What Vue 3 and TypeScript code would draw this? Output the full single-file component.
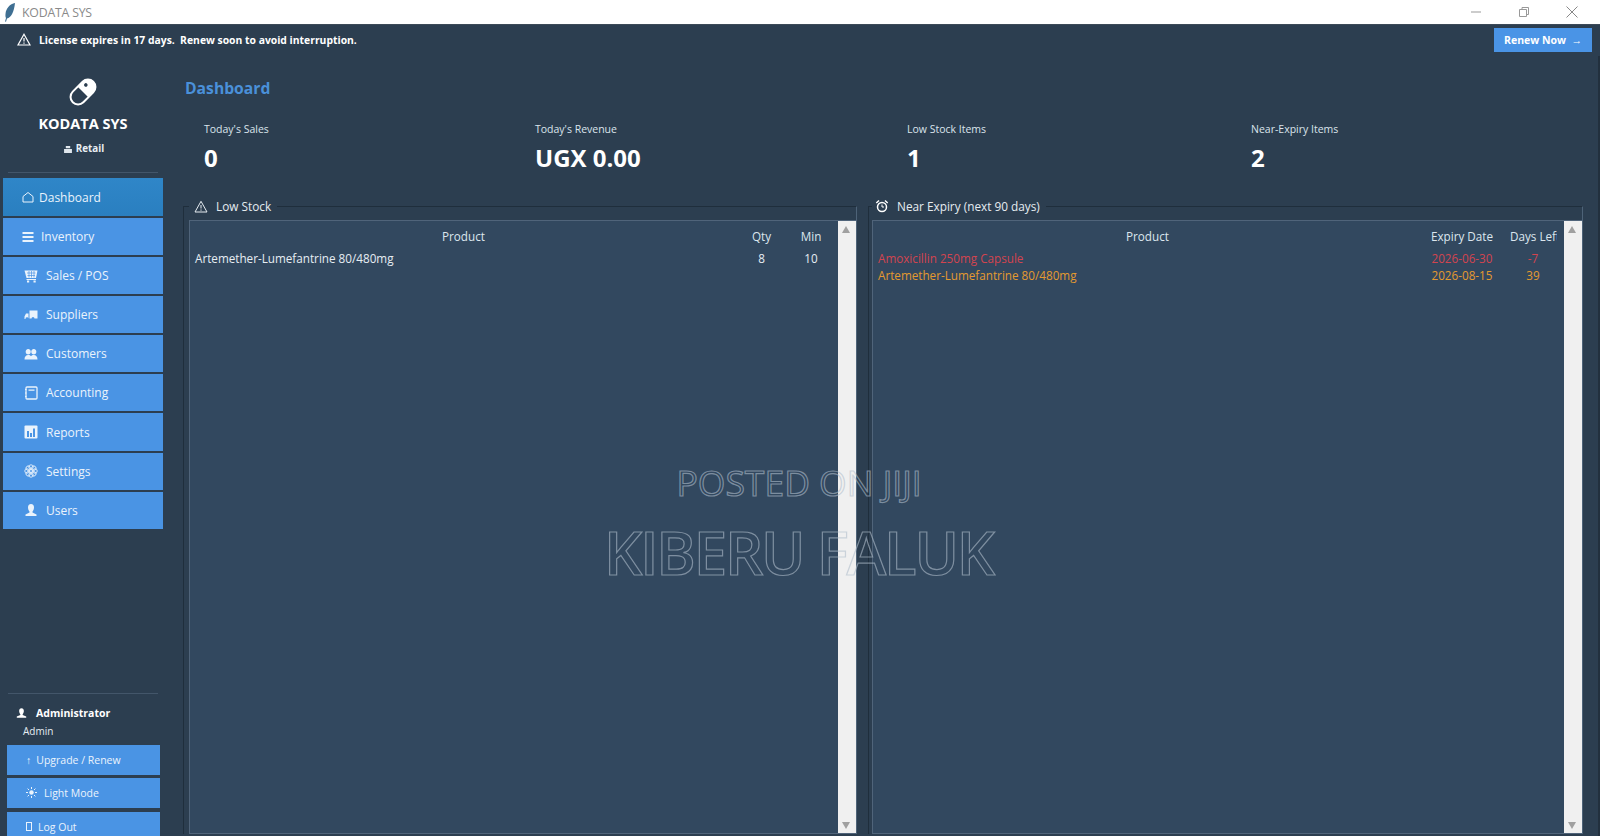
<script setup lang="ts">
interface NavItem { label: string; icon: string; active?: boolean }
const nav: NavItem[] = [
  { label: 'Dashboard', icon: 'home', active: true },
  { label: 'Inventory', icon: 'menu' },
  { label: 'Sales / POS', icon: 'cart' },
  { label: 'Suppliers', icon: 'truck' },
  { label: 'Customers', icon: 'people' },
  { label: 'Accounting', icon: 'book' },
  { label: 'Reports', icon: 'chart' },
  { label: 'Settings', icon: 'gear' },
  { label: 'Users', icon: 'user' },
]
const stats = [
  { label: "Today's Sales", value: '0' },
  { label: "Today's Revenue", value: 'UGX 0.00' },
  { label: 'Low Stock Items', value: '1' },
  { label: 'Near-Expiry Items', value: '2' },
]
const expiry = [
  { name: 'Amoxicillin 250mg Capsule', date: '2026-06-30', days: '-7', cls: 'red' },
  { name: 'Artemether-Lumefantrine 80/480mg', date: '2026-08-15', days: '39', cls: 'orange' },
]
const petals = [0, 45, 90, 135, 180, 225, 270, 315]
</script>

<template>
  <div class="app">
    <header class="titlebar">
      <svg class="feather" width="12" height="20" viewBox="0 0 12 20">
        <path d="M11 1C6 2 2 6 1.500 12c-.2 2 0 3 .5 4L1 19.500l1 .3 1-3.300c4-1 7-6 8-15.500z" fill="#3f6f92" />
      </svg>
      <span class="app-name">KODATA SYS</span>
      <div class="win-controls">
        <svg width="14" height="14" viewBox="0 0 14 14"><path d="M2 7h10" stroke="#999" fill="none" /></svg>
        <svg width="14" height="14" viewBox="0 0 14 14"><path d="M2.500 4.500h7v7h-7zM5 4.500V2.500h6.500v7h-2" stroke="#999" fill="none" /></svg>
        <svg width="14" height="14" viewBox="0 0 14 14"><path d="M1.500 1.500l11 11M12.500 1.500l-11 11" stroke="#888" fill="none" /></svg>
      </div>
    </header>

    <div class="banner">
      <svg class="warn" width="14" height="13" viewBox="0 0 14 13"><path d="M7 1.300L13 12H1zM7 5v3.500M7 9.500v1.200" stroke="#fff" stroke-width="1.200" fill="none" /></svg>
      <span class="banner-text">License expires in 17 days.&nbsp; Renew soon to avoid interruption.</span>
      <button class="renew">Renew Now &nbsp;→</button>
    </div>

    <div class="main">
      <aside class="sidebar">
        <div class="brand">
          <svg width="32" height="32" viewBox="0 0 32 32">
            <g transform="rotate(-45 16 16)">
              <rect x="1.500" y="8.500" width="29" height="15" rx="7.500" fill="none" stroke="#fff" stroke-width="2" />
              <path d="M16 8.500h7.500a7.500 7.500 0 0 1 0 15H16z" fill="#fff" />
              <circle cx="23" cy="13" r="1.800" fill="#2c3e50" />
            </g>
          </svg>
          <div class="brand-name">KODATA SYS</div>
          <div class="brand-sub">
            <svg width="8" height="7" viewBox="0 0 9 8"><path d="M2 0h5v2.500H2zM0 3.500h9V8H0z" fill="#dfe6ec" /></svg>
            <span>Retail</span>
          </div>
        </div>
        <nav class="nav">
          <a v-for="item in nav" :key="item.label" class="nav-item" :class="{ active: item.active, menu: item.icon === 'menu' }">
            <svg class="nav-icon" width="14" height="14" viewBox="0 0 14 14" fill="#eaf3fc">
              <path v-if="item.icon === 'home'" d="M2 6.500L7 2.500l5 4v5.500H2z" fill="none" stroke="#eaf3fc" />
              <path v-else-if="item.icon === 'menu'" d="M1.500 2h11v2h-11zM1.500 6h11v2h-11zM1.500 10h11v2h-11z" />
              <template v-else-if="item.icon === 'cart'">
                <path d="M.5 1.500h13L12 9H2.500z" />
                <path d="M3 4h8.500M3.500 6.500h7.500M5 2v6.500M7.500 2v6.500M10 2v6.500" stroke="#4a94e4" stroke-width=".7" fill="none" />
                <path d="M2.500 10h9.500v1H2.500zM3 11.500h2.200v2H3zM9.500 11.500h2.200v2H9.500z" />
              </template>
              <path v-else-if="item.icon === 'truck'" d="M5.500 2.500h8v8h-3a1.500 1.500 0 0 0-3 0h-2zM.5 8.500L2 5.500h2.500v5a1.500 1.500 0 0 0-3 .5H.5z" />
              <path v-else-if="item.icon === 'people'" d="M4.200 2a2.500 2.500 0 0 1 2.500 3c0 1.500-1 2.500-2.500 2.500S1.700 6.500 1.700 5a2.500 2.500 0 0 1 2.500-3zM9.800 2a2.500 2.500 0 0 1 2.500 3c0 1.500-1 2.500-2.500 2.500S7.300 6.500 7.300 5a2.500 2.500 0 0 1 2.500-3zM.5 12.500c0-3 1.500-4.500 3.700-4.500 1.300 0 2.300.4 2.800 1.200C7.500 8.400 8.500 8 9.800 8c2.200 0 3.700 1.500 3.700 4.500z" />
              <template v-else-if="item.icon === 'book'">
                <rect x="2" y="1" width="11" height="12" rx="1" fill="none" stroke="#eaf3fc" stroke-width="1.300" />
                <path d="M4.500 3.500h6v1.200h-6zM1 3h1.500v1H1zM1 6.500h1.500v1H1zM1 10h1.500v1H1z" />
              </template>
              <template v-else-if="item.icon === 'chart'">
                <rect x=".5" y=".5" width="13" height="13" rx="1" />
                <path d="M3 6h2v6H3zM6 8h2v4H6zM9 3.500h2V12H9z" fill="#4a94e4" />
              </template>
              <template v-else-if="item.icon === 'gear'">
                <g fill="none" stroke="#eaf3fc" stroke-width=".9">
                  <circle v-for="a in petals" :key="a" cx="7" cy="3" r="2.200" :transform="`rotate(${a} 7 7)`" />
                  <circle cx="7" cy="7" r="1.500" />
                </g>
              </template>
              <path v-else d="M7 1c2 0 3 1.500 3 3.500S9 8 8.500 8.500V9.500L12.500 11.500V13h-11V11.500L5.500 9.500V8.500C5 8 4 6.500 4 4.500S5 1 7 1z" />
            </svg>
            <span>{{ item.label }}</span>
          </a>
        </nav>
        <div class="foot">
          <div class="foot-user">
            <svg width="11" height="12" viewBox="0 0 14 14" fill="#fff"><path d="M7 1c2 0 3 1.500 3 3.500S9 8 8.500 8.500V9.500L13 11.500V13H1V11.500L5.500 9.500V8.500C5 8 4 6.500 4 4.500S5 1 7 1z" /></svg>
            <span>Administrator</span>
          </div>
          <div class="foot-role">Admin</div>
          <button class="foot-btn up"><span class="g">↑</span>Upgrade / Renew</button>
          <button class="foot-btn light">
            <svg width="11" height="11" viewBox="0 0 11 11"><circle cx="5.500" cy="5.500" r="2.200" fill="#eaf3fc" /><path d="M5.500 0v2M5.500 9v2M0 5.500h2M9 5.500h2M1.600 1.600L3 3M8 8l1.400 1.400M9.400 1.600L8 3M3 8L1.600 9.400" stroke="#eaf3fc" fill="none" /></svg>
            Light Mode
          </button>
          <button class="foot-btn out"><span class="tofu"></span>Log Out</button>
        </div>
      </aside>

      <section class="content">
        <h1 class="title">Dashboard</h1>
        <div class="stats">
          <div v-for="s in stats" :key="s.label" class="stat">
            <div class="stat-label">{{ s.label }}</div>
            <div class="stat-value">{{ s.value }}</div>
          </div>
        </div>
        <div class="panels">
          <fieldset class="group left">
            <legend>
              <svg width="14" height="13" viewBox="0 0 14 13"><path d="M7 1.300L13 12H1zM7 5v3.500M7 9.500v1.200" stroke="#e6ecf1" stroke-width="1" fill="none" /></svg>
              <span>Low Stock</span>
            </legend>
            <div class="table">
              <div class="table-body">
                <div class="row head low"><span>Product</span><span>Qty</span><span>Min</span></div>
                <div class="row low"><span class="name">Artemether-Lumefantrine 80/480mg</span><span>8</span><span>10</span></div>
              </div>
              <div class="scroll"><i class="up"></i><i class="down"></i></div>
            </div>
          </fieldset>
          <fieldset class="group right">
            <legend>
              <svg width="14" height="14" viewBox="0 0 14 14"><circle cx="7" cy="8" r="4.500" fill="none" stroke="#fff" stroke-width="1.500" /><path d="M7 5.500V8h2" stroke="#fff" fill="none" /><path d="M.8 3.500L3.500 1l1 1-2.700 2.500zM13.200 3.500L10.500 1l-1 1 2.700 2.500z" fill="#fff" /></svg>
              <span>Near Expiry (next 90 days)</span>
            </legend>
            <div class="table">
              <div class="table-body">
                <div class="row head exp"><span>Product</span><span>Expiry Date</span><span class="clip">Days Left</span></div>
                <div v-for="e in expiry" :key="e.name" class="row exp" :class="e.cls"><span class="name">{{ e.name }}</span><span>{{ e.date }}</span><span>{{ e.days }}</span></div>
              </div>
              <div class="scroll"><i class="up"></i><i class="down"></i></div>
            </div>
          </fieldset>
        </div>
      </section>
    </div>

    <div class="watermark">
      <div class="wm-small">POSTED ON JIJI</div>
      <div class="wm-big">KIBERU FALUK</div>
    </div>
  </div>
</template>

<style>
html, body { margin: 0; background: #2c3e50; }
</style>

<style scoped>
.app {
  position: relative;
  width: 1600px;
  height: 836px;
  overflow: hidden;
  display: flex;
  flex-direction: column;
  background: #2c3e50;
  color: #e6edf3;
  font-family: "Open Sans", "Noto Sans", sans-serif;
  font-size: 12px;
}
.titlebar {
  height: 25px;
  flex: none;
  display: flex;
  align-items: center;
  padding-left: 4px;
  background: #fff;
  border-bottom: 1px solid #3c4a58;
  box-sizing: border-box;
}
.feather { margin-right: 6px; }
.app-name { color: #8a8a8a; font-size: 12.300px; letter-spacing: -.2px; }
.win-controls { margin-left: auto; display: flex; gap: 34px; margin-right: 21px; }
.banner {
  height: 31px;
  flex: none;
  display: flex;
  align-items: center;
  padding: 0 8px 2px 17px;
  box-sizing: border-box;
}
.warn { margin-right: 8px; }
.banner-text { font-weight: 700; font-size: 10.370px; color: #fff; }
.renew {
  margin-left: auto;
  width: 98px;
  height: 24px;
  border: 0;
  background: #4a94e6;
  color: #fff;
  font: 700 10.500px "Open Sans", sans-serif;
  padding: 0;
}
.main { flex: 1; min-height: 0; display: flex; border-right: 2px solid #22303e; }
.sidebar { width: 183px; flex: none; padding-left: 3px; box-sizing: border-box; display: flex; flex-direction: column; }
.sidebar > * { flex: none; }
.brand { width: 160px; height: 122px; box-sizing: border-box; padding-top: 20px; display: flex; flex-direction: column; align-items: center; }
.brand-name { font-weight: 700; font-size: 14.500px; color: #fff; margin-top: 7px; line-height: 18px; }
.brand-sub { display: flex; align-items: center; gap: 4px; margin-top: 9px; padding-left: 2px; font-size: 9.800px; font-weight: 700; color: #e8eef3; line-height: 14px; }
.nav { display: flex; flex-direction: column; gap: 2px; position: relative; width: 160px; }
.nav::before { content: ""; position: absolute; left: 5px; right: 5px; top: -6px; height: 1px; background: #43566a; }
.nav-item {
  height: 37.100px;
  flex: none;
  display: flex;
  align-items: center;
  gap: 8px;
  padding-left: 21px;
  background: #4a94e4;
  color: #eaf3fc;
  font-size: 12px;
  box-sizing: border-box;
}
.nav-item.active { background: linear-gradient(#2f86c8, #2a7fc0); padding-left: 18px; gap: 4px; height: 38px; }
.nav-item.menu { padding-left: 18px; gap: 6px; }
.foot { width: 160px; margin-top: 177px; position: relative; }
.foot::before { content: ""; position: absolute; left: 5px; right: 5px; top: -13px; height: 1px; background: #43566a; }
.foot-user { display: flex; align-items: center; gap: 9px; padding-left: 13px; font-weight: 700; font-size: 10.500px; color: #fff; height: 20px; margin-top: -3px; }
.foot-role { padding-left: 20px; font-size: 10px; line-height: 16px; color: #e6edf3; }
.foot-btn {
  display: flex;
  align-items: center;
  gap: 7px;
  width: 153px;
  height: 30px;
  margin: 6px 0 0 4px;
  padding: 0 0 0 19px;
  border: 0;
  background: #4a94e4;
  color: #eaf3fc;
  font: 10.500px "Open Sans", sans-serif;
  box-sizing: border-box;
}
.foot-btn + .foot-btn { margin-top: 3px; }
.foot-btn.up { gap: 5px; padding-left: 19px; }
.foot-btn.out { padding-left: 19px; gap: 6px; margin-top: 4px; }
.tofu { width: 4px; height: 7px; border: 1px solid #eaf3fc; }
.content { flex: 1; min-width: 0; display: flex; flex-direction: column; }
.title { margin: 0 0 0 2px; padding-top: 20px; font-size: 15.700px; font-weight: 700; line-height: 24px; color: #4a90d9; height: 24px; }
.stats { display: grid; grid-template-columns: 331px 372px 344px 1fr; padding-left: 21px; margin-top: 22px; height: 59px; }
.stat-label { font-size: 10.500px; line-height: 14px; color: #dbe4ec; }
.stat-value { font-size: 24px; font-weight: 700; line-height: 32px; color: #fff; margin-top: 6px; }
.panels { display: flex; gap: 11px; flex: 1; min-height: 0; margin-top: 18px; margin-bottom: 2px; }
.group {
  margin: 0;
  padding: 7px 0 0 5px;
  border: 1px solid #1f2e3c;
  border-right-color: #4e6378;
  border-bottom: 0;
  min-width: 0;
  box-sizing: border-box;
  display: flex;
}
.group.left { width: 674px; }
.group.right { width: 715px; padding-left: 3px; }
legend { display: flex; align-items: center; gap: 8px; padding: 0 6px 0 5px; font-size: 11.800px; line-height: 14px; color: #e6ecf1; height: 14px; }
.group.right legend { padding-left: 3px; }
.table { height: 100%; display: flex; box-sizing: border-box; border: 1px solid #50647a; border-right: 0; background: #32485f; width: 100%; }
.table-body { flex: 1; min-width: 0; padding-top: 6px; }
.row { display: grid; line-height: 16.500px; font-size: 11.700px; color: #e6edf3; text-align: center; }
.row.head { line-height: 18px; height: 23px; color: #dce6ee; }
.row.low { grid-template-columns: 547px 49px 1fr; padding-right: 2px; }
.row.exp { grid-template-columns: 549px 80px 62px; }
.name { text-align: left; padding-left: 5px; }
.clip { white-space: nowrap; overflow: hidden; text-align: left; padding-left: 8px; margin-right: 7px; }
.row.red { color: #d2444f; }
.row.orange { color: #e49a2f; }
.scroll { position: relative; width: 18px; flex: none; background: #f0f0f0; }
.scroll i { position: absolute; left: 4px; width: 0; height: 0; border-left: 4px solid transparent; border-right: 4px solid transparent; }
.scroll .up { top: 5px; border-bottom: 7px solid #a0a0a0; }
.scroll .down { bottom: 4px; border-top: 7px solid #a0a0a0; }
.watermark {
  position: absolute;
  left: 0;
  right: 0;
  top: 459px;
  text-align: center;
  color: transparent;
  -webkit-text-stroke: 1.200px rgba(176, 190, 204, .6);
  pointer-events: none;
}
.wm-small { font-size: 35.500px; line-height: 46px; padding-right: 2px; }
.wm-big { font-size: 60px; font-weight: 600; letter-spacing: -2.200px; line-height: 80px; margin-top: 7px; padding-right: 3px; }
</style>
